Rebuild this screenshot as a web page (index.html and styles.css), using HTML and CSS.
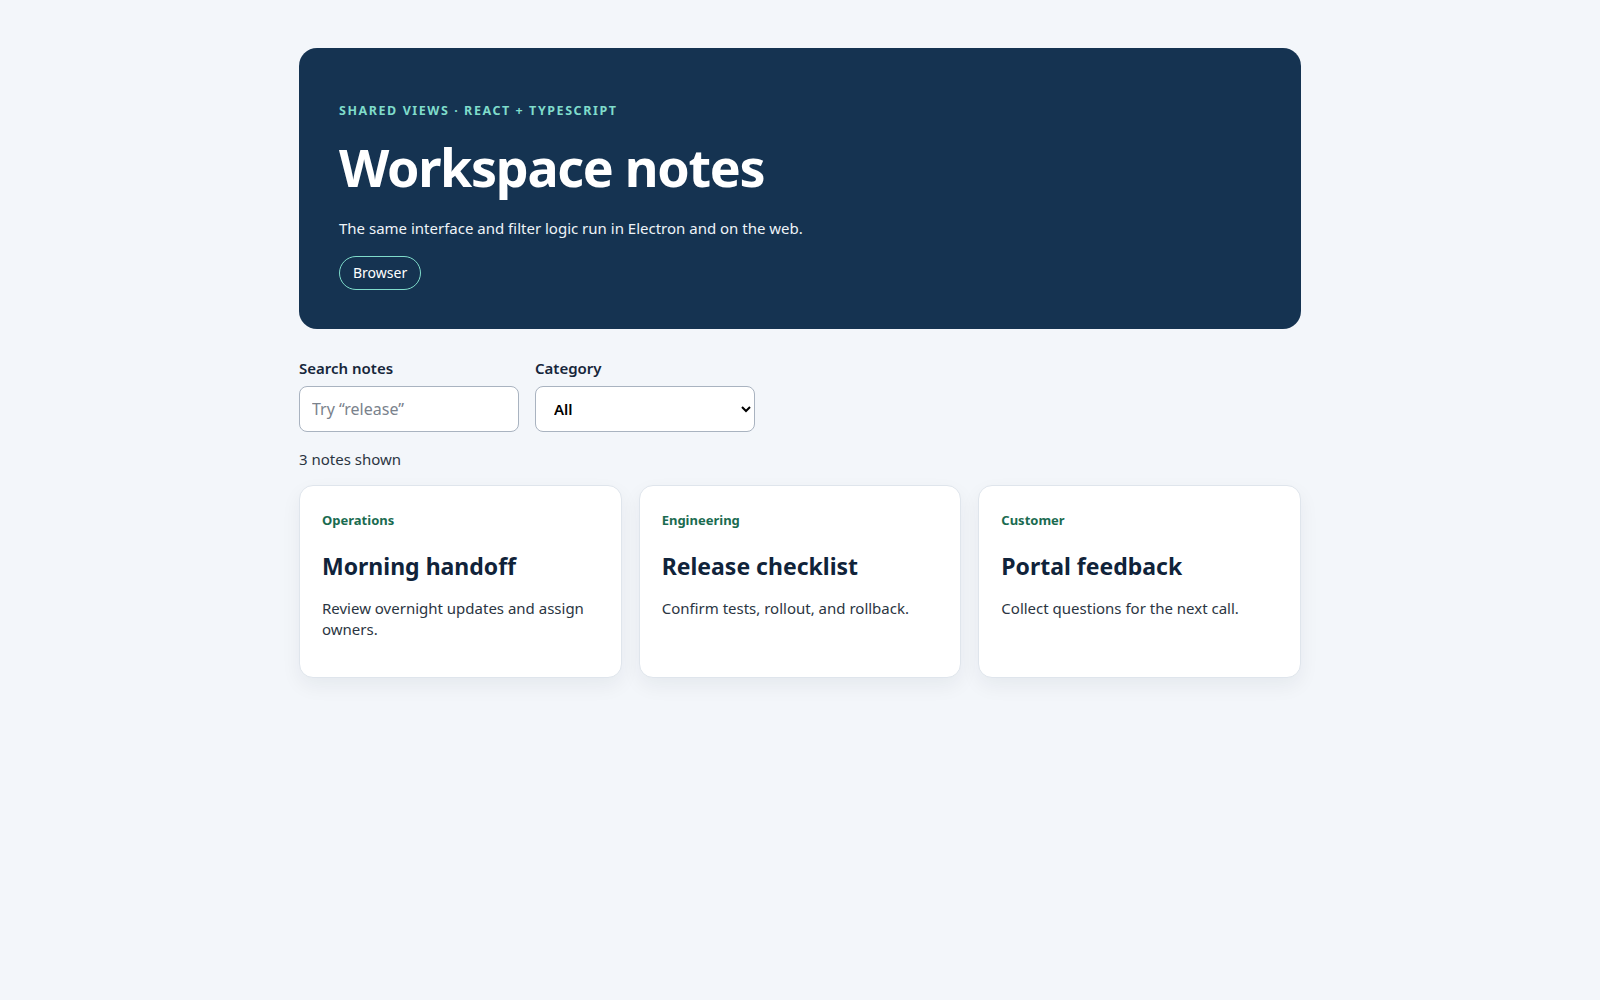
FILE: index.html
```html
<!DOCTYPE html>
<html lang="en">
<head>
<meta charset="utf-8">
<title>Workspace notes</title>
<link rel="stylesheet" href="styles.css">
</head>
<body>
<main class="page">
  <header class="hero">
    <p class="eyebrow">Shared views · React + TypeScript</p>
    <h1 class="hero-title">Workspace notes</h1>
    <p class="hero-sub">The same interface and filter logic run in Electron and on the web.</p>
    <span class="pill">Browser</span>
  </header>

  <section class="filters">
    <label class="field">
      <span class="field-label">Search notes</span>
      <input class="input" type="text" placeholder="Try “release”">
    </label>
    <label class="field">
      <span class="field-label">Category</span>
      <select class="select">
        <option>All</option>
        <option>Operations</option>
        <option>Engineering</option>
        <option>Customer</option>
      </select>
    </label>
  </section>

  <p class="count">3 notes shown</p>

  <section class="cards">
    <article class="card">
      <p class="card-cat">Operations</p>
      <h2 class="card-title">Morning handoff</h2>
      <p class="card-body">Review overnight updates and assign owners.</p>
    </article>
    <article class="card">
      <p class="card-cat">Engineering</p>
      <h2 class="card-title">Release checklist</h2>
      <p class="card-body">Confirm tests, rollout, and rollback.</p>
    </article>
    <article class="card">
      <p class="card-cat">Customer</p>
      <h2 class="card-title">Portal feedback</h2>
      <p class="card-body">Collect questions for the next call.</p>
    </article>
  </section>
</main>
</body>
</html>
```

FILE: styles.css
```css
* { box-sizing: border-box; }

html, body {
  margin: 0;
  padding: 0;
  background: #f3f6fa;
}

body {
  font-family: "Segoe UI", "Noto Sans", "Open Sans", sans-serif;
  color: #10233a;
}

.page {
  max-width: 1002px;
  margin: 0 auto;
  padding: 48px 0;
}

.hero {
  background: #153351;
  color: #ffffff;
  border-radius: 18px;
  padding: 54px 40px 39px;
}

.eyebrow {
  margin: 0;
  font-size: 12.5px;
  font-weight: 700;
  letter-spacing: 0.125em;
  text-transform: uppercase;
  color: #7fdccb;
  line-height: 1.4;
}

.hero-title {
  margin: 18px 0 22px;
  font-size: 52px;
  font-weight: 700;
  line-height: 1.1;
  letter-spacing: -0.025em;
}

.hero-sub {
  margin: 0 0 17px;
  font-size: 15px;
  line-height: 1.5;
  color: #eef3f8;
}

.pill {
  display: inline-block;
  border: 1px solid #7fdccb;
  border-radius: 999px;
  padding: 5px 13px 6px;
  font-size: 14px;
  line-height: 1.5;
  color: #ffffff;
}

.filters {
  display: flex;
  gap: 16px;
  margin-top: 30px;
}

.field {
  display: flex;
  flex-direction: column;
  gap: 7px;
  width: 220px;
}

.field-label {
  font-size: 15px;
  font-weight: 600;
  color: #16263b;
  line-height: 1.3;
}

.input,
.select {
  height: 46px;
  width: 100%;
  border: 1px solid #a9b3c0;
  border-radius: 8px;
  background: #ffffff;
  font-family: inherit;
  font-size: 15px;
  padding: 0 12px;
  color: #10233a;
}

.input {
  font-size: 16px;
}

.input::placeholder { color: #7a828c; }

.select {
  font-weight: 600;
  font-size: 15px;
  padding: 0 6px 0 14px;
  color: #000;
}

.count {
  margin: 17px 0 15px;
  font-size: 15px;
  color: #2b3542;
  line-height: 1.4;
}

.cards {
  display: grid;
  grid-template-columns: repeat(3, 1fr);
  gap: 17px;
}

.card {
  background: #ffffff;
  border: 1px solid #dfe5ec;
  border-radius: 14px;
  padding: 25px 22px 24px;
  min-height: 193px;
  box-shadow: 0 8px 20px rgba(16, 35, 58, 0.06);
}

.card-cat {
  margin: 0;
  font-size: 13px;
  font-weight: 700;
  color: #1a6b50;
  line-height: 1.4;
}

.card-title {
  margin: 23px 0 16px;
  font-size: 23px;
  font-weight: 700;
  color: #10233a;
  line-height: 1.3;
}

.card-body {
  margin: 0;
  font-size: 15px;
  line-height: 1.4;
  color: #2b3542;
}
```
